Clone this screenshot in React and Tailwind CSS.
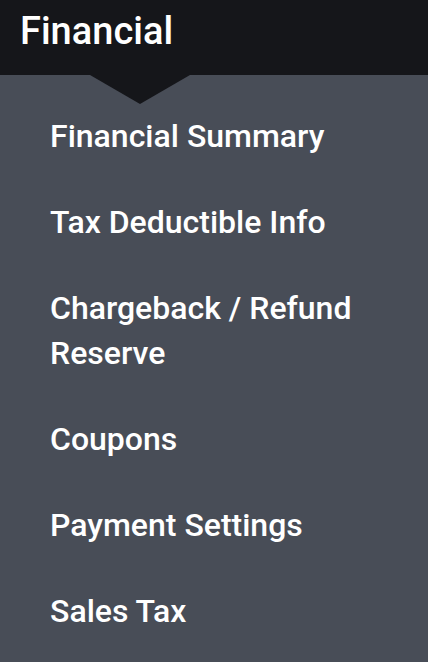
const ITEMS = [
  'Financial Summary',
  'Tax Deductible Info',
  'Chargeback / Refund Reserve',
  'Coupons',
  'Payment Settings',
  'Sales Tax',
]

export default function App() {
  return (
    <div
      className="w-[428px] h-[662px] bg-[#484d57] overflow-hidden"
      style={{ fontFamily: 'Roboto, "Noto Sans", sans-serif' }}
    >
      {/* Section header with pointer */}
      <div className="relative h-[75px] bg-[#15161a] pl-[20px] pt-[11px]">
        <h1 className="text-[38px] leading-[40px] font-medium text-white">Financial</h1>
        <div className="absolute left-[90px] top-[75px] w-0 h-0 border-l-[50px] border-r-[50px] border-t-[29px] border-l-transparent border-r-transparent border-t-[#15161a]" />
      </div>

      <ul className="pt-[19px] pl-[50px] pr-6">
        {ITEMS.map((item, i) => (
          <li key={i} className="pt-5 pb-[21px] text-[32px] leading-[45px] font-medium text-white">
            {item}
          </li>
        ))}
      </ul>
    </div>
  )
}
